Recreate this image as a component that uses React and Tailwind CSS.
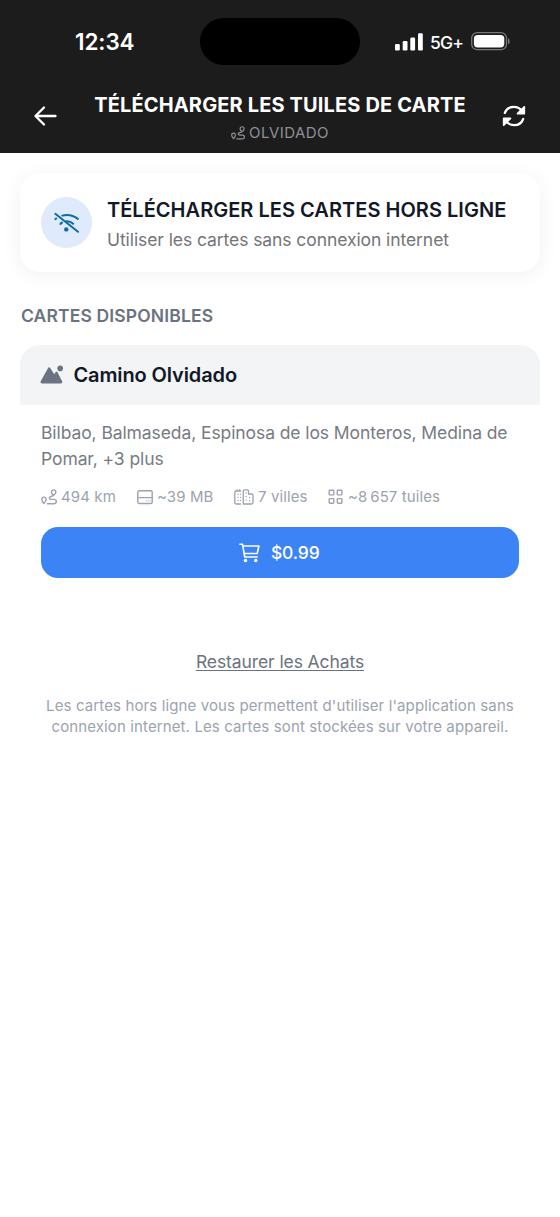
const ArrowLeftIcon = () => (
    <svg width="24" height="24" viewBox="0 0 24 24" fill="none" stroke="currentColor" strokeWidth="2.300" strokeLinecap="round" strokeLinejoin="round">
        <path d="M22.500 12H2.500M11 3.500L2.500 12l8.500 8.500" />
    </svg>
);

const RefreshIcon = () => (
    <svg width="24" height="24" viewBox="0 0 24 24" fill="none" stroke="currentColor" strokeWidth="2.200" strokeLinecap="round" strokeLinejoin="round">
        <path d="M2.800 9C4.200 5.200 7.700 2.800 12 2.800c3 0 5.700 1.300 7.500 3.400M21.200 15c-1.400 3.800-4.900 6.200-9.200 6.200-3 0-5.700-1.300-7.500-3.400" />
        <path d="M22.300 2.800v6.800h-6.800zM1.700 21.200v-6.800h6.800z" fill="currentColor" strokeWidth="1.700" />
    </svg>
);

const RouteIcon = ({ size }) => (
    <svg width={size} height={size} viewBox="0 0 16 16" fill="none" stroke="currentColor" strokeWidth="1.400" strokeLinecap="round" strokeLinejoin="round">
        <path d="M2.900 14.500C1.400 12.900.800 11.500.800 10.300a2.150 2.150 0 0 1 4.300 0c0 1.200-.7 2.600-2.200 4.200z" />
        <path d="M12.400 6.400c-1.500-1.300-2-2.300-2-3.300a2.250 2.250 0 0 1 4.500 0c0 1.500-1 2.700-2.500 3.300z" />
        <path d="M12.400 6.500L9.200 7.900a1.300 1.300 0 0 0 .5 2.500h3.500a2.100 2.100 0 0 1 0 4.300H6.500" />
    </svg>
);

const WifiOffIcon = () => (
    <svg width="28" height="24" viewBox="0 0 28 24" fill="none" stroke="currentColor" strokeWidth="2" strokeLinecap="round">
        <path d="M2.300 2.800L25 20.800" />
        <path d="M9.200 4.600c5.800-1.600 11.200-.2 15.700 3.300" />
        <path d="M2.400 8.100l.8-.6M7.400 12.900l1.600-1.300M13.500 10.200c2.500-.1 4.800.8 6.700 2.600" />
        <circle cx="13.300" cy="18.400" r="2.200" fill="currentColor" stroke="none" />
    </svg>
);

const MountainIcon = () => (
    <svg width="24" height="20" viewBox="0 0 24 20" fill="currentColor">
        <path d="M8.100 2.900a1.200 1.200 0 0 1 2.100 0l4 6.300 1.300-1.900a1.200 1.200 0 0 1 2 0l4.600 8.900a1.500 1.500 0 0 1-1.300 2.200H2A1.500 1.500 0 0 1 .7 16.200z" />
        <circle cx="20.200" cy="3.400" r="2.800" />
    </svg>
);

const DiskIcon = () => (
    <svg width="16" height="16" viewBox="0 0 16 16" fill="none" stroke="currentColor" strokeWidth="1.400" strokeLinecap="round">
        <rect x=".8" y="1.700" width="14.400" height="12.800" rx="1.600" />
        <path d="M.8 8.600h14.400" />
        <path d="M9.200 11.700h.1M11.200 11.700h.1M13 11.700h.1" strokeWidth="1" />
    </svg>
);

const CityIcon = () => (
    <svg width="20" height="16" viewBox="0 0 20 16" fill="none" stroke="currentColor" strokeWidth="1.300" strokeLinecap="round" strokeLinejoin="round">
        <path d="M6.500 15H2.300A1.500 1.500 0 0 1 .8 13.500v-10A1.500 1.500 0 0 1 2.300 2h4.500M3 2V.7M5.600 2V.7" />
        <path d="M9.300 15V2A1.200 1.200 0 0 1 10.500.8h2.800A1.200 1.200 0 0 1 14.500 2v3h3A1.500 1.500 0 0 1 19 6.500v7a1.500 1.500 0 0 1-1.500 1.500z" />
        <path d="M4 5.200h.1M6.500 5.200h.1M4 8.300h.1M6.500 8.300h.1M4 11.400h.1M6.500 11.400h.1M12.100 4h.1M12.100 7.500h.1M15.600 8.500h.1M12.100 11.200h.1M15.600 11.700h.1" />
    </svg>
);

const GridIcon = () => (
    <svg width="16" height="16" viewBox="0 0 16 16" fill="none" stroke="currentColor" strokeWidth="1.400">
        <rect x="1.200" y="1.300" width="4.600" height="4.600" rx=".7" />
        <rect x="9.300" y="1.300" width="4.600" height="4.600" rx=".7" />
        <rect x="1.200" y="9.600" width="4.600" height="4.600" rx=".7" />
        <rect x="9.300" y="9.600" width="4.600" height="4.600" rx=".7" />
    </svg>
);

const CartIcon = () => (
    <svg width="21" height="20" viewBox="0 0 21 20" fill="none" stroke="currentColor" strokeWidth="1.600" strokeLinecap="round" strokeLinejoin="round">
        <path d="M.9 1.300h2.700L5.700 14h12.500M4 3h15.900l-1.700 7.500H5.200" />
        <circle cx="6.500" cy="17.500" r="1.700" fill="currentColor" stroke="none" />
        <circle cx="16.800" cy="17.500" r="1.700" fill="currentColor" stroke="none" />
    </svg>
);

const SignalIcon = () => (
    <svg width="28" height="18" viewBox="0 0 28 18" fill="currentColor">
        <rect x="0" y="11" width="4.800" height="6.500" rx="1.300" />
        <rect x="7.700" y="8" width="4.800" height="9.500" rx="1.300" />
        <rect x="15.300" y="4.500" width="4.800" height="13" rx="1.300" />
        <rect x="23" y=".3" width="4.800" height="17.200" rx="1.300" />
    </svg>
);

const BatteryIcon = () => (
    <svg width="40" height="19" viewBox="0 0 40 19" fill="none">
        <rect x=".7" y=".7" width="34.800" height="17" rx="5.500" stroke="#777" strokeWidth="1.300" />
        <rect x="2.900" y="2.900" width="30.400" height="12.600" rx="3.700" fill="#fff" />
        <path d="M37 6.300c1.900.7 2.600 4.900 0 6z" fill="#777" />
    </svg>
);

const stats = [
    { icon: <RouteIcon size={16} />, label: '494 km', spacing: 'w-[75px]' },
    { icon: <DiskIcon />, label: '~39 MB', spacing: 'w-[76px]' },
    { icon: <CityIcon />, label: '7 villes', spacing: 'w-[73px]' },
    { icon: <GridIcon />, label: '~8\u202f657 tuiles', spacing: 'w-[112px]' },
];

const StatusBar = () => (
    <div className="flex h-[82px] pt-[18px] text-white">
        <div className="w-[200px] pl-[75px] text-[22.500px] leading-[48px] font-semibold tracking-[-0.100px]">12:34</div>
        <div className="h-[47px] w-[160px] rounded-full bg-black" />
        <div className="flex h-[47px] items-center pl-[35px]">
            <SignalIcon />
            <span className="ml-[7px] w-[34px] pt-[2px] text-[17.500px] leading-6 font-medium tracking-[-0.800px]">5G+</span>
            <span className="ml-[7px]"><BatteryIcon /></span>
        </div>
    </div>
);

const Header = () => (
    <header className="h-[153px] bg-[#1c1c1c]">
        <StatusBar />
        <div className="flex h-[71px] items-start justify-between pr-[34px] pl-[33px] text-white">
            <button className="mt-[22px]"><ArrowLeftIcon /></button>
            <div className="pl-px text-center">
                <h1 className="pt-[10px] text-[20px] leading-[26px] font-bold tracking-[0.140px] whitespace-nowrap">TÉLÉCHARGER LES TUILES DE CARTE</h1>
                <p className="flex items-center justify-center gap-[4px] text-[15px] leading-[29px] tracking-[0.450px] text-[#8e9096]">
                    <RouteIcon size={14} />
                    OLVIDADO
                </p>
            </div>
            <button className="mt-[22px]"><RefreshIcon /></button>
        </div>
    </header>
);

export default function App() {
    return (
        <div className="min-h-[1217px] w-[560px] overflow-hidden bg-white font-['Inter',sans-serif]">
            <Header />
            <main className="px-5 pt-5">
                <section className="flex h-[99px] items-center rounded-[20px] bg-white pl-[21px] shadow-[0_3px_20px_rgba(0,0,0,0.060)]">
                    <div className="flex size-[51px] items-center justify-center rounded-full bg-[#dfeafd] text-[#0e6ba3]">
                        <WifiOffIcon />
                    </div>
                    <div className="pt-[4px] pl-[15px] whitespace-nowrap">
                        <h2 className="text-[20px] leading-[30px] font-semibold tracking-[0.030px] text-[#111827]">TÉLÉCHARGER LES CARTES HORS LIGNE</h2>
                        <p className="text-[17.500px] leading-[29px] tracking-[-0.080px] text-[#737579]">Utiliser les cartes sans connexion internet</p>
                    </div>
                </section>

                <h3 className="mt-[32px] pl-px text-[17.500px] leading-[24px] font-semibold tracking-[0.140px] text-[#6b7280]">CARTES DISPONIBLES</h3>

                <section className="mt-[17px]">
                    <div className="flex h-[60px] items-center rounded-t-[20px] bg-[#f2f4f6] pl-[20px]">
                        <span className="text-[#6b7280]"><MountainIcon /></span>
                        <h4 className="pl-[9.500px] text-[20px] font-semibold tracking-[-0.120px] text-[#111827]">Camino Olvidado</h4>
                    </div>
                    <div className="px-[21px] pt-[15px]">
                        <p className="text-[17.500px] leading-[25.500px] tracking-[-0.090px] whitespace-nowrap text-[#777b84]">
                            Bilbao, Balmaseda, Espinosa de los Monteros, Medina de
                            <br />
                            Pomar, +3 plus
                        </p>
                        <div className="mt-[15px] flex h-[22px] gap-[21px] whitespace-nowrap text-[#9ca3af]">
                            {stats.map((stat) => (
                                <div key={stat.label} className={`flex items-center gap-[4px] text-[15px] tracking-[0.100px] ${stat.spacing}`}>
                                    <span className="shrink-0">{stat.icon}</span>
                                    <span>{stat.label}</span>
                                </div>
                            ))}
                        </div>
                        <button className="mt-[19px] flex h-[51px] w-[478px] items-center justify-center gap-[10.500px] rounded-[17px] bg-[#3c83f6] pr-px text-[17.500px] font-medium tracking-[-0.150px] text-white">
                            <CartIcon />
                            <span className="pt-px">$0.99</span>
                        </button>
                    </div>
                </section>

                <div className="mt-[72px] text-center">
                    <a className="text-[17.500px] leading-[24px] tracking-[-0.100px] text-[#6b7280] underline underline-offset-2">Restaurer les Achats</a>
                </div>
                <p className="mt-[22px] text-center text-[15px] leading-[20.500px] tracking-[0.120px] whitespace-nowrap text-[#9ca3af]">
                    Les cartes hors ligne vous permettent d'utiliser l'application sans
                    <br />
                    connexion internet. Les cartes sont stockées sur votre appareil.
                </p>
            </main>
        </div>
    );
}
